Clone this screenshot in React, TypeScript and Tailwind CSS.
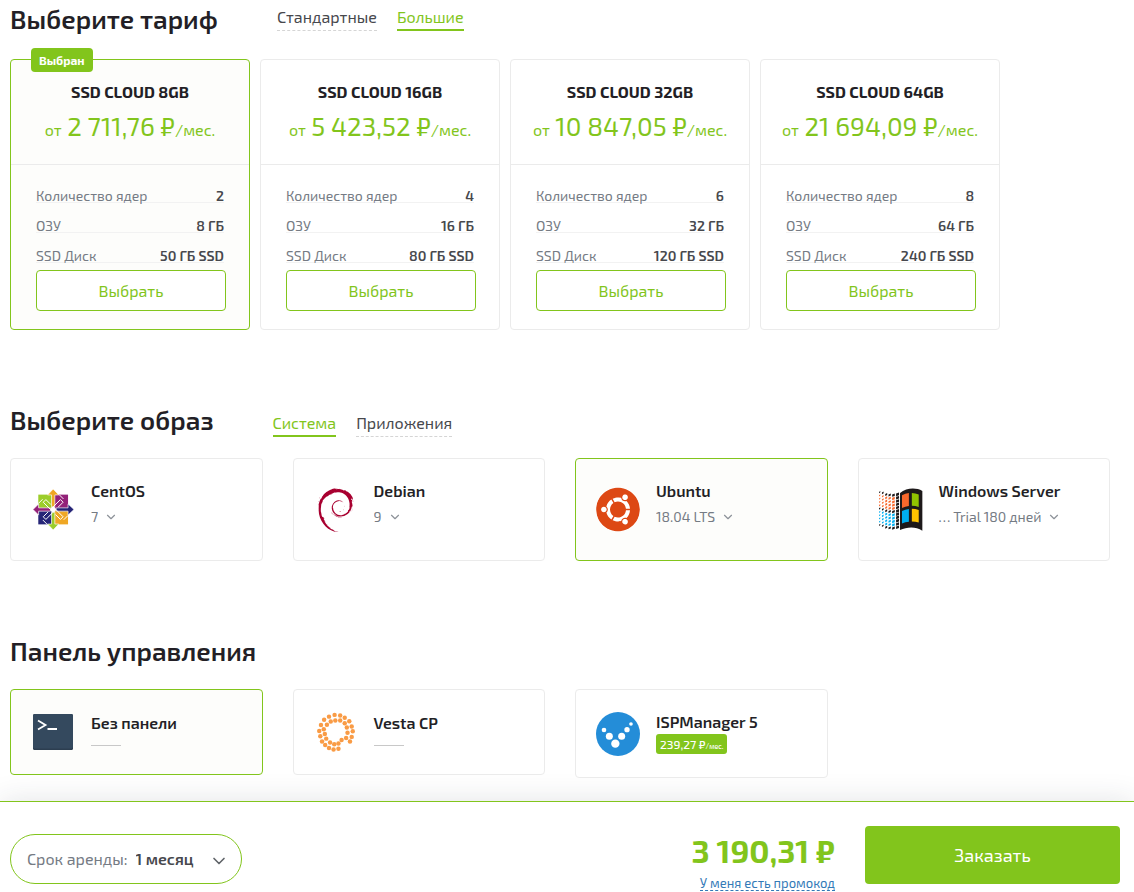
import { useState, type ReactNode } from "react";
import { FaUbuntu } from "react-icons/fa";
import { SiDebian } from "react-icons/si";
import { ChevronDown } from "lucide-react";

type Plan = { name: string; price: string; cores: string; ram: string; disk: string };

const plans: Plan[] = [
  { name: "SSD CLOUD 8GB", price: "2 711,76 ₽", cores: "2", ram: "8 ГБ", disk: "50 ГБ SSD" },
  { name: "SSD CLOUD 16GB", price: "5 423,52 ₽", cores: "4", ram: "16 ГБ", disk: "80 ГБ SSD" },
  { name: "SSD CLOUD 32GB", price: "10 847,05 ₽", cores: "6", ram: "32 ГБ", disk: "120 ГБ SSD" },
  { name: "SSD CLOUD 64GB", price: "21 694,09 ₽", cores: "8", ram: "64 ГБ", disk: "240 ГБ SSD" },
];

function CentosLogo() {
  return (
    <svg viewBox="0 0 124 124" className="size-[41px]" aria-hidden="true">
      <rect x="16" y="17" width="44" height="44" fill="#9ccd2a" />
      <rect x="62" y="17" width="44" height="44" fill="#932279" />
      <rect x="16" y="63" width="44" height="44" fill="#262577" />
      <rect x="62" y="63" width="44" height="44" fill="#efa724" />
      <g stroke="#fff" strokeWidth="2">
        <path d="M61 0 78 18H66V54H56V18H44Z" fill="#efa724" />
        <path d="M124 62 106 45V57H70V67H106V79Z" fill="#262577" />
        <path d="M61 124 78 106H66V70H56V106H44Z" fill="#9ccd2a" />
        <path d="M0 62 17 45V57H53V67H17V79Z" fill="#932279" />
      </g>
      {[0, 90, 180, 270].map((angle) => (
        <path
          key={angle}
          transform={`rotate(${angle} 61 62)`}
          d="M54 47 39 32 31 40 53 62M16 44 29 31"
          stroke="#fff"
          strokeWidth="3"
          fill="none"
        />
      ))}
      <circle cx="61" cy="62" r="8" fill="#fff" />
    </svg>
  );
}

function WindowsLogo() {
  // столбцы «рассыпающихся» квадратов слева от флага
  const columns = [
    { x: 0, y: 12, w: 4, h: 4 },
    { x: 9, y: 14, w: 5, h: 5 },
    { x: 19, y: 18, w: 6, h: 6 },
    { x: 29, y: 20, w: 7, h: 6 },
    { x: 40, y: 20, w: 8, h: 7 },
    { x: 52, y: 17, w: 9, h: 8 },
  ];
  return (
    <svg viewBox="0 0 134 134" className="size-[46px]" aria-hidden="true">
      {columns.map((col, c) =>
        Array.from({ length: 11 }, (_, r) => {
          const black = r === 0 || r === 5 || r === 10 || c === 5;
          const color = black ? "#1d191a" : r < 5 ? "#f8682c" : "#00adef";
          const y = col.y + r * 10;
          return (
            <path key={`${c}-${r}`} d={`M${col.x} ${y}l${col.w} -3v${col.h}l${-col.w} 3Z`} fill={color} />
          );
        })
      )}
      <path d="M64 15C84-1 113-2 132 9V130C112 117 86 118 64 128Z" fill="#1d191a" />
      <path d="M70 22Q80 16 91 15V55Q80 56 70 61Z" fill="#f8682c" />
      <path d="M100 15Q111 15 121 20V58Q111 54 100 54Z" fill="#91c300" />
      <path d="M70 70Q80 65 91 64V103Q80 104 70 108Z" fill="#00adef" />
      <path d="M100 63Q111 63 121 67V105Q111 102 100 102Z" fill="#ffc300" />
    </svg>
  );
}

function TerminalLogo() {
  return (
    <svg viewBox="0 0 40 36" className="h-9 w-10" aria-hidden="true">
      <rect width="40" height="36" rx="1.5" fill="#2c3e50" />
      <rect width="40" height="34.5" rx="1.5" fill="#34495e" />
      <path d="M5 6.5 12.5 11 5 15.5" fill="none" stroke="#fff" strokeWidth="1.8" />
      <path d="M14.5 15H24" stroke="#fff" strokeWidth="2" />
    </svg>
  );
}

const vestaDots = [
  [937, 257], [953, 259], [966, 265], [979, 275], [986, 290], [989, 304], [986, 320], [981, 333],
  [948, 354], [934, 356], [921, 352], [910, 343], [901, 333], [896, 318], [893, 303], [898, 286],
  [907, 271], [921, 262], [939, 273], [953, 273], [966, 281], [972, 293], [974, 308], [970, 323],
  [957, 329], [948, 339], [936, 341], [924, 336], [913, 325], [909, 312], [906, 298], [915, 285],
  [926, 276],
];

function VestaLogo() {
  return (
    <svg viewBox="878 246 126 120" className="h-[42px] w-11" fill="#f99b45" aria-hidden="true">
      {vestaDots.map(([cx, cy]) => (
        <circle key={`${cx}-${cy}`} cx={cx} cy={cy} r="6.4" />
      ))}
    </svg>
  );
}

function IspLogo() {
  return (
    <svg viewBox="107 93 132 132" className="size-11" fill="#fff" aria-hidden="true">
      <circle cx="173" cy="159" r="66" fill="#248dd8" />
      <circle cx="131" cy="147" r="7" />
      <circle cx="147" cy="166" r="10.5" />
      <circle cx="165" cy="188" r="12.5" />
      <circle cx="184" cy="166" r="10.5" />
      <circle cx="200" cy="146" r="8" />
      <circle cx="212" cy="129" r="5.5" />
    </svg>
  );
}

const systems = [
  { name: "CentOS", version: "7", logo: <CentosLogo /> },
  { name: "Debian", version: "9", logo: <SiDebian className="size-11 text-[#a80030]" /> },
  { name: "Ubuntu", version: "18.04 LTS", logo: <FaUbuntu className="size-[45px] rounded-full bg-white text-[#dd4814]" /> },
  { name: "Windows Server", version: "… Trial 180 дней", logo: <WindowsLogo /> },
];

const panels = [
  { name: "Без панели", price: "", logo: <TerminalLogo /> },
  { name: "Vesta CP", price: "", logo: <VestaLogo /> },
  { name: "ISPManager 5", price: "239,27 ₽", logo: <IspLogo /> },
];

function Tabs({ items, initial, className }: { items: string[]; initial: string; className: string }) {
  const [current, setCurrent] = useState(initial);
  return (
    <div className={`flex gap-5 ${className}`}>
      {items.map((item) => (
        <button
          key={item}
          type="button"
          onClick={() => setCurrent(item)}
          className={
            item === current
              ? "border-b-2 border-[#82c51c] pb-0.5 text-base leading-5 text-[#82c51c]"
              : "border-b border-dashed border-[#d5d5d5] pb-[3px] text-base leading-5 text-[#47484d]"
          }
        >
          {item}
        </button>
      ))}
    </div>
  );
}

function Heading({ children }: { children: ReactNode }) {
  return <h2 className="text-[26px] leading-[38px] font-semibold text-[#231f26]">{children}</h2>;
}

function Spec({ label, value }: { label: string; value: string }) {
  return (
    <div className="flex h-[17px] justify-between border-b border-[#f2f2f2] text-sm leading-5">
      <dt className="text-[#757b84]">{label}</dt>
      <dd className="font-semibold text-[#47484d]">{value}</dd>
    </div>
  );
}

function PlanCard({ plan, selected, onSelect }: { plan: Plan; selected: boolean; onSelect: () => void }) {
  return (
    <article
      className={`relative w-60 rounded border ${selected ? "border-[#82c51c] bg-[#fdfdfb]" : "border-[#ebebeb] bg-white"}`}
    >
      {selected && (
        <span className="absolute -top-3 left-5 rounded bg-[#82c51c] px-2 text-xs leading-6 font-bold text-white">
          Выбран
        </span>
      )}
      <div className="border-b border-[#ebebeb] pt-5 pb-4 text-center whitespace-nowrap">
        <h3 className="text-base leading-6 font-bold text-[#231f26]">{plan.name}</h3>
        <p className="mt-1 text-base leading-9 text-[#82c51c]">
          от <span className="ml-0.5 text-[26px]">{plan.price}</span>/мес.
        </p>
      </div>
      <div className="px-[25px] pt-[21px] pb-[18px]">
        <dl className="flex flex-col gap-[13px]">
          <Spec label="Количество ядер" value={plan.cores} />
          <Spec label="ОЗУ" value={plan.ram} />
          <Spec label="SSD Диск" value={plan.disk} />
        </dl>
        <button
          type="button"
          onClick={onSelect}
          className="mt-[7px] h-[41px] w-[190px] rounded border border-[#82c51c] bg-white text-base text-[#82c51c]"
        >
          Выбрать
        </button>
      </div>
    </article>
  );
}

export default function App() {
  const [plan, setPlan] = useState("SSD CLOUD 8GB");
  const [system, setSystem] = useState("Ubuntu");
  const [panel, setPanel] = useState("Без панели");

  const cardBorder = (selected: boolean) =>
    selected ? "border-[#82c51c] bg-[#fdfdfb]" : "border-[#ebebeb] bg-white";

  return (
    <div className="overflow-hidden bg-white font-['Exo_2','Roboto',sans-serif] text-[#231f26]">
      <main className="pr-6 pb-[23px] pl-2.5">
        <section>
          <div className="mb-[21px] flex items-start gap-[59px]">
            <Heading>Выберите тариф</Heading>
            <Tabs items={["Стандартные", "Большие"]} initial="Большие" className="mt-[7px]" />
          </div>
          <div className="flex flex-wrap gap-2.5">
            {plans.map((p) => (
              <PlanCard key={p.name} plan={p} selected={p.name === plan} onSelect={() => setPlan(p.name)} />
            ))}
          </div>
        </section>

        <section className="mt-[71px]">
          <div className="mb-[19px] flex items-start gap-[59px]">
            <Heading>Выберите образ</Heading>
            <Tabs items={["Система", "Приложения"]} initial="Система" className="mt-3" />
          </div>
          <div className="grid grid-cols-4 gap-[30px]">
            {systems.map((s) => (
              <div
                key={s.name}
                onClick={() => setSystem(s.name)}
                className={`flex h-[103px] gap-4 rounded border px-5 ${cardBorder(s.name === system)}`}
              >
                <div className="flex w-11 shrink-0 items-center justify-center">{s.logo}</div>
                <div className="min-w-0 pt-5">
                  <label className="block text-base leading-6 font-semibold whitespace-nowrap">
                    <input
                      type="radio"
                      name="system"
                      className="sr-only"
                      checked={s.name === system}
                      onChange={() => setSystem(s.name)}
                    />
                    {s.name}
                  </label>
                  <div className="mt-1 flex items-center gap-1.5 text-[#757b84]">
                    <select
                      aria-label={`Версия ${s.name}`}
                      className="field-sizing-content appearance-none bg-transparent text-sm leading-5"
                    >
                      <option>{s.version}</option>
                    </select>
                    <ChevronDown className="size-3.5 shrink-0 text-[#8d9299]" aria-hidden="true" />
                  </div>
                </div>
              </div>
            ))}
          </div>
        </section>

        <section className="mt-[71px]">
          <div className="mb-[19px]">
            <Heading>Панель управления</Heading>
          </div>
          <div className="grid grid-cols-4 items-start gap-[30px]">
            {panels.map((p) => (
              <label
                key={p.name}
                className={`flex gap-4 rounded border px-5 ${p.price ? "h-[89px]" : "h-[86px]"} ${cardBorder(p.name === panel)}`}
              >
                <input
                  type="radio"
                  name="panel"
                  className="sr-only"
                  checked={p.name === panel}
                  onChange={() => setPanel(p.name)}
                />
                <span className="flex w-11 shrink-0 items-center justify-center">{p.logo}</span>
                <span className={p.price ? "pt-5" : "pt-[21px]"}>
                  <span className="block text-base leading-6 font-semibold whitespace-nowrap">{p.name}</span>
                  {p.price ? (
                    <span className="block h-5 w-fit rounded-[3px] bg-[#82c51c] px-1 text-xs leading-5 font-medium whitespace-nowrap text-white">
                      {p.price}
                      <span className="text-[7px]">/мес.</span>
                    </span>
                  ) : (
                    <span className="mt-2.5 block h-px w-[30px] bg-[#c8c8c8]" />
                  )}
                </span>
              </label>
            ))}
          </div>
        </section>
      </main>

      <footer className="flex items-start justify-between border-t border-[#82c51c] bg-white pt-6 pr-3.5 pl-2.5 shadow-[0_0_30px_rgba(35,50,60,0.13)]">
        <div className="mt-2 flex h-[50px] w-[232px] items-center rounded-full border border-[#82c51c] pr-3 pl-4 text-base">
          <label htmlFor="period" className="text-[#757b84]">
            Срок аренды:
          </label>
          <select
            id="period"
            className="ml-2 field-sizing-content appearance-none bg-transparent font-semibold text-[#47484d]"
          >
            <option>1 месяц</option>
          </select>
          <ChevronDown className="mt-1 ml-auto size-5 shrink-0 text-[#606469]" aria-hidden="true" />
        </div>
        <div className="flex items-start gap-[30px]">
          <div className="flex flex-col items-end pt-1">
            <p className="text-[32px] leading-10 font-bold text-[#82c51c]">3 190,31 ₽</p>
            <a
              href="#promo"
              className="mt-1.5 border-b border-dashed border-[#337ab7] text-[13px] leading-[14px] text-[#337ab7]"
            >
              У меня есть промокод
            </a>
          </div>
          <button type="button" className="h-[58px] w-[255px] rounded bg-[#82c51c] text-lg text-white">
            Заказать
          </button>
        </div>
      </footer>
    </div>
  );
}
